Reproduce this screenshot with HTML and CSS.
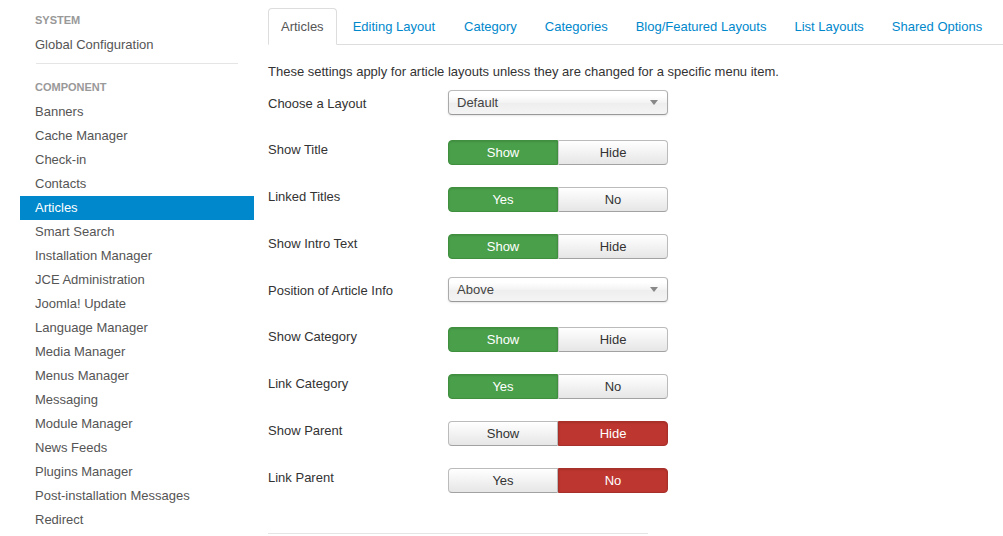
FILE: index.html
```html
<!DOCTYPE html>
<html>
<head>
<meta charset="utf-8">
<link rel="stylesheet" href="styles.css">
</head>
<body>
<div class="page">
  <aside class="sidebar">
    <ul class="nav-list">
      <li class="nav-header">System</li>
      <li class="item">Global Configuration</li>
      <li class="divider"></li>
      <li class="nav-header">Component</li>
      <li class="item">Banners</li>
      <li class="item">Cache Manager</li>
      <li class="item">Check-in</li>
      <li class="item">Contacts</li>
      <li class="item active">Articles</li>
      <li class="item">Smart Search</li>
      <li class="item">Installation Manager</li>
      <li class="item">JCE Administration</li>
      <li class="item">Joomla! Update</li>
      <li class="item">Language Manager</li>
      <li class="item">Media Manager</li>
      <li class="item">Menus Manager</li>
      <li class="item">Messaging</li>
      <li class="item">Module Manager</li>
      <li class="item">News Feeds</li>
      <li class="item">Plugins Manager</li>
      <li class="item">Post-installation Messages</li>
      <li class="item">Redirect</li>
    </ul>
  </aside>
  <main class="main">
    <ul class="tabs">
      <li class="tab active">Articles</li>
      <li class="tab">Editing Layout</li>
      <li class="tab">Category</li>
      <li class="tab">Categories</li>
      <li class="tab">Blog/Featured Layouts</li>
      <li class="tab">List Layouts</li>
      <li class="tab">Shared Options</li>
    </ul>
    <p class="intro">These settings apply for article layouts unless they are changed for a specific menu item.</p>

    <div class="row row-select">
      <div class="label">Choose a Layout</div>
      <div class="select"><span>Default</span><span class="arrow"></span></div>
    </div>
    <div class="row">
      <div class="label">Show Title</div>
      <div class="btn-group"><span class="btn on-green">Show</span><span class="btn">Hide</span></div>
    </div>
    <div class="row">
      <div class="label">Linked Titles</div>
      <div class="btn-group"><span class="btn on-green">Yes</span><span class="btn">No</span></div>
    </div>
    <div class="row">
      <div class="label">Show Intro Text</div>
      <div class="btn-group"><span class="btn on-green">Show</span><span class="btn">Hide</span></div>
    </div>
    <div class="row row-select">
      <div class="label">Position of Article Info</div>
      <div class="select"><span>Above</span><span class="arrow"></span></div>
    </div>
    <div class="row">
      <div class="label">Show Category</div>
      <div class="btn-group"><span class="btn on-green">Show</span><span class="btn">Hide</span></div>
    </div>
    <div class="row">
      <div class="label">Link Category</div>
      <div class="btn-group"><span class="btn on-green">Yes</span><span class="btn">No</span></div>
    </div>
    <div class="row">
      <div class="label">Show Parent</div>
      <div class="btn-group"><span class="btn">Show</span><span class="btn on-red">Hide</span></div>
    </div>
    <div class="row">
      <div class="label">Link Parent</div>
      <div class="btn-group"><span class="btn">Yes</span><span class="btn on-red">No</span></div>
    </div>
    <div class="rule"></div>
  </main>
</div>
</body>
</html>
```

FILE: styles.css
```css
* { box-sizing: border-box; }
html, body { margin: 0; padding: 0; background: #fff; }
body {
  font-family: "Liberation Sans", Arial, sans-serif;
  font-size: 13px;
  line-height: 18px;
  color: #333;
  overflow: hidden;
  height: 536px;
}
.page {
  display: flex;
  padding: 9px 0 0 20px;
}
.sidebar {
  width: 234px;
  flex: none;
}
.nav-list {
  list-style: none;
  margin: 0;
  padding: 0;
}
.nav-header {
  font-size: 11px;
  font-weight: bold;
  line-height: 20px;
  color: #999;
  text-transform: uppercase;
  padding: 1px 15px 3px;
}
.item {
  padding: 3px 15px;
  line-height: 18px;
  color: #555;
}
.item.active {
  background: #0088cc;
  color: #fff;
}
.divider {
  height: 1px;
  background: #e5e5e5;
  margin: 6px 16px 12px 16px;
}
.main {
  margin-left: 14px;
  margin-top: -1px;
  flex: 1;
  min-width: 0;
}
.tabs {
  list-style: none;
  margin: 0 0 18px 0;
  padding: 0;
  display: flex;
  border-bottom: 1px solid #ddd;
  white-space: nowrap;
}
.tab {
  padding: 9px 12px 8px 12px;
  line-height: 18px;
  margin-right: 2px;
  margin-bottom: -1px;
  border: 1px solid transparent;
  border-radius: 4px 4px 0 0;
  color: #0088cc;
}
.tab:nth-child(2), .tab:nth-child(3) { padding-left: 13px; }
.tab.active {
  color: #555;
  border-color: #ddd #ddd transparent #ddd;
  background: #fff;
}
.intro {
  margin: 0 0 8px 0;
}
.row {
  display: flex;
  height: 29px;
  margin-bottom: 18px;
}
.row-select { height: 28px; }
.label {
  width: 180px;
  flex: none;
  padding-top: 6px;
}
.select {
  margin-top: 1px;
  width: 220px;
  height: 25px;
  border: 1px solid #aaa;
  border-color: #bbb #aaa #999 #aaa;
  border-radius: 4px;
  background: linear-gradient(#fff 20%, #f3f3f3 50%, #eee 52%, #f4f4f4);
  box-shadow: 0 1px 2px rgba(0,0,0,0.1);
  display: flex;
  align-items: center;
  justify-content: space-between;
  padding: 0 9px 0 8px;
  color: #444;
}
.arrow {
  width: 0;
  height: 0;
  border-left: 4px solid transparent;
  border-right: 4px solid transparent;
  border-top: 5px solid #888;
}
.btn-group {
  margin-top: 5px;
  display: flex;
  width: 220px;
  height: 25px;
}
.btn {
  flex: 1;
  display: flex;
  align-items: center;
  justify-content: center;
  border: 1px solid #bbb;
  border-bottom-color: #a2a2a2;
  background: linear-gradient(#fff, #e6e6e6);
  color: #333;
  line-height: 18px;
}
.btn:first-child {
  border-radius: 4px 0 0 4px;
}
.btn:last-child {
  border-radius: 0 4px 4px 0;
  border-left-color: #ccc;
}
.btn.on-green {
  background: #4a9f4a;
  border-color: #3f8f3f;
  color: #fff;
  box-shadow: inset 0 1px 2px rgba(0,0,0,0.12);
}
.btn.on-red {
  background: #bd362f;
  border-color: #a8302a;
  color: #fff;
  box-shadow: inset 0 1px 2px rgba(0,0,0,0.12);
}
.rule {
  margin-top: 41px;
  width: 380px;
  border-top: 1px solid #e5e5e5;
}
```
